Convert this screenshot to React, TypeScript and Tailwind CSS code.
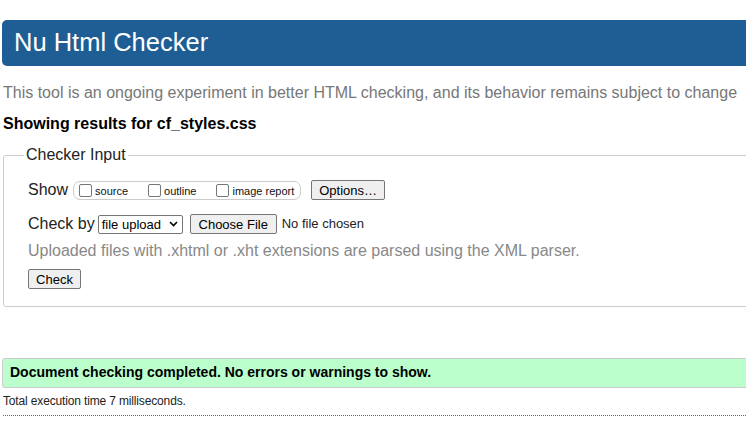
export default function App() {
  const checks = [
    { label: "source", gap: "mr-[20px]" },
    { label: "outline", gap: "mr-[20px]" },
    { label: "image report", gap: "mr-[6px]" },
  ];

  return (
    <div className="w-[746px] h-[439px] overflow-hidden bg-white font-['Liberation_Sans',Arial,sans-serif] text-black">
      <div className="w-[800px] pl-[2px] pt-[20px]">
        <div className="h-[46px] bg-[#1f5e94] rounded-l-[5px] flex items-center pl-[12px]">
          <h1 className="text-white text-[25.5px] leading-none">Nu Html Checker</h1>
        </div>

        <p className="mt-[18px] ml-[1px] text-[16px] leading-[18px] text-[#777]">
          This tool is an ongoing experiment in better HTML checking, and its behavior remains subject to change
        </p>
        <p className="mt-[13px] ml-[1px] text-[16px] leading-[18px] font-bold">
          Showing results for cf_styles.css
        </p>

        <fieldset className="mt-[13px] ml-[1px] border border-[#ccc] rounded-[3px] pl-[24px] pb-[15px]">
          <legend className="ml-[-4px] px-[2px] text-[16px] leading-[18px] text-[#222]">Checker Input</legend>

          <div className="mt-[16px] h-[20px] flex items-center">
            <span className="text-[16px] text-[#222]">Show</span>
            <div className="ml-[5px] h-[19px] flex items-center border border-[#ccc] rounded-[7px] pl-[5px]">
              {checks.map((c) => (
                <label key={c.label} className={`flex items-center ${c.gap}`}>
                  <span className="w-[13px] h-[13px] border border-[#767676] rounded-[2px] bg-white mr-[3px]" />
                  <span className="text-[11px] leading-none mt-[3px] text-[#111]">{c.label}</span>
                </label>
              ))}
            </div>
            <button className="ml-[10px] h-[20px] px-[7px] bg-[#efefef] border border-[#767676] rounded-[2px] text-[13px] leading-none text-black">
              Options…
            </button>
          </div>

          <div className="mt-[14px] h-[20px] flex items-center">
            <span className="text-[16px] text-[#222]">Check by</span>
            <div className="ml-[3px] h-[19px] w-[85px] flex items-center justify-between border border-[#767676] rounded-[2px] pl-[3px] pr-[4px] bg-white">
              <span className="text-[13px] leading-none">file upload</span>
              <svg width="9" height="6" viewBox="0 0 9 6" fill="none">
                <path d="M1 1l3.5 3.5L8 1" stroke="#000" strokeWidth="1.6" />
              </svg>
            </div>
            <button className="ml-[7px] h-[20px] w-[87px] bg-[#efefef] border border-[#767676] rounded-[2px] text-[13px] leading-none text-black">
              Choose File
            </button>
            <span className="ml-[5px] text-[13px] text-[#222]">No file chosen</span>
          </div>

          <p className="mt-[8px] text-[16px] leading-[18px] text-[#888]">
            Uploaded files with .xhtml or .xht extensions are parsed using the XML parser.
          </p>

          <button className="mt-[9px] h-[20px] w-[53px] bg-[#efefef] border border-[#767676] rounded-[2px] text-[13px] leading-none text-black">
            Check
          </button>
        </fieldset>

        <div className="mt-[51px] h-[30px] bg-[#bbffcc] border border-[#ccc] rounded-l-[3px] flex items-center pl-[7px]">
          <span className="text-[14px] font-bold">Document checking completed. No errors or warnings to show.</span>
        </div>

        <p className="mt-[6px] ml-[1px] text-[12px] leading-[14px] text-[#222] tracking-[-0.15px] font-['Liberation_Sans_Narrow','Liberation_Sans',sans-serif]">
          Total execution time 7 milliseconds.
        </p>
        <div className="mt-[7px] ml-[1px] border-t border-dotted border-[#666]" />
      </div>
    </div>
  );
}
